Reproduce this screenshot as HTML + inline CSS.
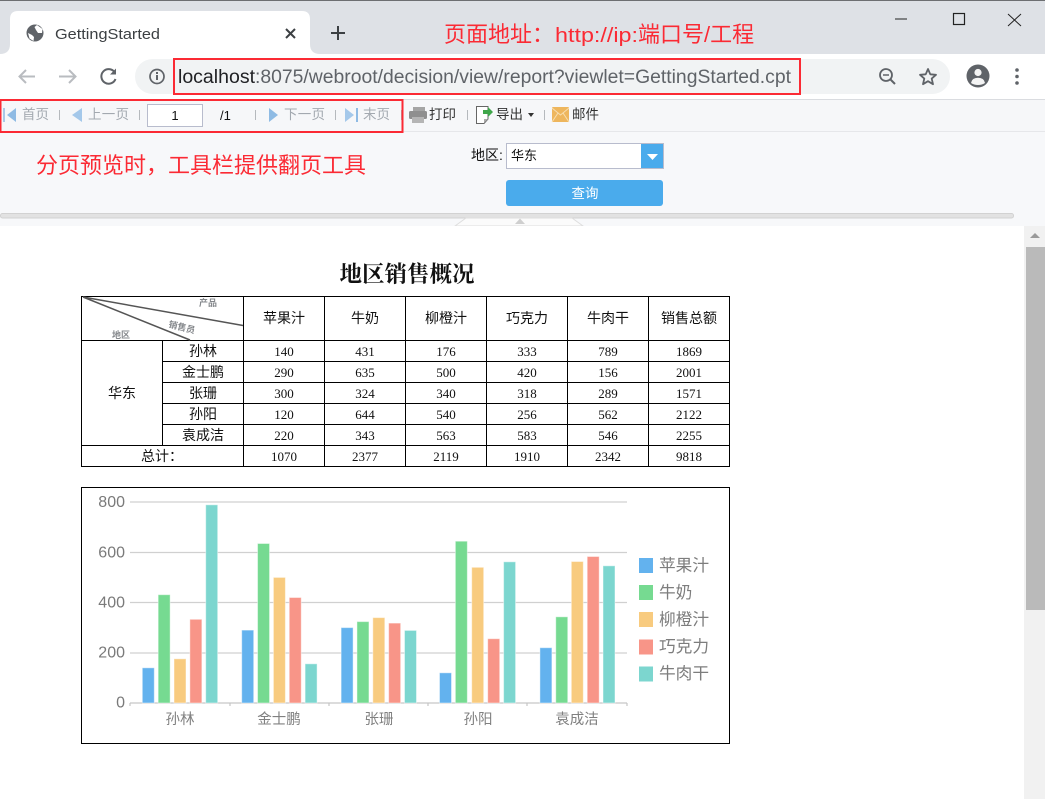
<!DOCTYPE html>
<html lang="zh">
<head>
<meta charset="utf-8">
<title>GettingStarted</title>
<style>
html,body{margin:0;padding:0;background:#fff;width:1045px;height:799px;overflow:hidden}
svg{display:block}
text{font-family:"Liberation Sans","Noto Sans CJK SC",sans-serif}
.tb{font-family:"Liberation Serif","WenQuanYi Zen Hei","Noto Sans CJK SC",sans-serif;font-size:14px;fill:#111;text-anchor:middle}
.nm{font-size:13px}
.gr{font-size:13.5px;fill:#a3a9b0;font-family:"Liberation Sans","Noto Sans CJK SC",sans-serif}
.dk{font-size:13.5px;fill:#333;font-family:"Liberation Sans","Noto Sans CJK SC",sans-serif}
.red{fill:#fb2a34;font-size:22px}
.ax{fill:#7a7a7a;font-size:16px;text-anchor:end}
.cat{fill:#808080;font-size:14.5px;text-anchor:middle}
.lg{fill:#7d7d7d;font-size:16.7px}
.s{fill:#85888c;font-size:9px}
</style>
</head>
<body>
<svg width="1045" height="799" viewBox="0 0 1045 799" xmlns="http://www.w3.org/2000/svg">
<!-- browser chrome -->
<rect width="1045" height="54" fill="#dee1e6"/>
<rect width="1045" height="1" fill="#6d6f72"/>
<path d="M0 54 Q10 54 10 44 V19 Q10 11 18 11 H302 Q310 11 310 19 V44 Q310 54 320 54 Z" fill="#fff"/>
<circle cx="35" cy="33" r="8.500" fill="#5f6368"/>
<path d="M37 25 L42.500 29 L42 33 L38 33 L36 30 L34.500 27 Z M28 33 L32 35 L34 37 L33.500 41 L29.500 38.500 Z" fill="#fff"/>
<text x="55" y="39" font-size="15" fill="#3c4043" textLength="105" lengthAdjust="spacingAndGlyphs">GettingStarted</text>
<path d="M286 29 L295 38 M295 29 L286 38" stroke="#3c4043" stroke-width="2"/>
<path d="M338 26 V40 M331 33 H345" stroke="#3c4043" stroke-width="2"/>
<text class="red" x="444" y="42">页面地址：</text>
<text x="555" y="42" fill="#fb2a34" font-size="20" textLength="83" lengthAdjust="spacingAndGlyphs">http://ip:</text>
<text class="red" x="638" y="42">端口号/工程</text>
<path d="M895 19 H907" stroke="#222" stroke-width="1"/>
<rect x="953.500" y="13.500" width="11" height="11" fill="none" stroke="#222" stroke-width="1.200"/>
<path d="M1008 14 L1021 26 M1021 14 L1008 26" stroke="#222" stroke-width="1"/>

<rect y="54" width="1045" height="45" fill="#fff"/>
<rect y="99" width="1045" height="1" fill="#dadce0"/>
<path d="M35 76.500 H20 M26 70 L19.500 76.500 L26 83" fill="none" stroke="#b9bcc0" stroke-width="2"/>
<path d="M59 76.500 H75 M69 70 L75.500 76.500 L69 83" fill="none" stroke="#b9bcc0" stroke-width="2"/>
<path d="M114.500 72 A7.300 7.300 0 1 0 115.500 79" fill="none" stroke="#5f6368" stroke-width="2"/>
<path d="M116 68.500 V74.500 H110 Z" fill="#5f6368"/>
<rect x="135" y="59" width="815" height="35" rx="17.500" fill="#f1f3f4"/>
<circle cx="157" cy="76.500" r="7" fill="none" stroke="#5f6368" stroke-width="1.700"/>
<rect x="156" y="75" width="2" height="5" fill="#5f6368"/>
<rect x="156" y="72" width="2" height="2" fill="#5f6368"/>
<text x="178" y="83" font-size="19" fill="#202124" textLength="77" lengthAdjust="spacingAndGlyphs">localhost</text>
<text x="255" y="83" font-size="19" fill="#5f6368" textLength="536" lengthAdjust="spacingAndGlyphs">:8075/webroot/decision/view/report?viewlet=GettingStarted.cpt</text>
<rect x="174" y="59" width="626" height="35" fill="none" stroke="#fb2a34" stroke-width="2"/>
<circle cx="886" cy="75" r="6" fill="none" stroke="#5f6368" stroke-width="1.800"/>
<path d="M883 75 H889" stroke="#5f6368" stroke-width="1.500"/>
<path d="M890.500 79.500 L895 84" stroke="#5f6368" stroke-width="2"/>
<path d="M928 69 L930.300 74.300 L936 74.800 L931.700 78.600 L933 84.200 L928 81.200 L923 84.200 L924.300 78.600 L920 74.800 L925.700 74.300 Z" fill="none" stroke="#5f6368" stroke-width="1.800" stroke-linejoin="round"/>
<circle cx="978" cy="76" r="11.500" fill="#5f6368"/>
<circle cx="978" cy="72.500" r="3.600" fill="#f4f4f4"/>
<path d="M971 83 Q972 77.800 978 77.800 Q984 77.800 985 83 Q982 85 978 85 Q974 85 971 83 Z" fill="#f4f4f4"/>
<circle cx="1017" cy="70" r="1.800" fill="#5f6368"/>
<circle cx="1017" cy="76.500" r="1.800" fill="#5f6368"/>
<circle cx="1017" cy="83" r="1.800" fill="#5f6368"/>

<!-- toolbar -->
<rect y="100" width="1045" height="31" fill="#f6f7f9"/>
<rect y="131" width="1045" height="1" fill="#e6e7ea"/>
<rect y="132" width="1045" height="94" fill="#f7f8fa"/>
<rect x="3" y="108" width="2" height="14" fill="#a9c9e8"/>
<path d="M7 115 L16 108 V122 Z" fill="#8fbbe4"/>
<text class="gr" x="22" y="119">首页</text>
<rect x="59" y="110" width="1" height="10" fill="#b5b9bd"/>
<path d="M72 115 L82 108 V122 Z" fill="#a4c8ea"/>
<text class="gr" x="88" y="119" textLength="41">上一页</text>
<rect x="139" y="110" width="1" height="10" fill="#b5b9bd"/>
<rect x="147.500" y="104.500" width="55" height="22" fill="#fff" stroke="#b8bccd"/>
<text x="175" y="120" font-size="13" fill="#111" text-anchor="middle">1</text>
<text x="220" y="120" font-size="13" fill="#111">/1</text>
<rect x="255" y="110" width="1" height="10" fill="#b5b9bd"/>
<path d="M269 108 L278 115 L269 122 Z" fill="#8fbbe4"/>
<text class="gr" x="284" y="119" textLength="41">下一页</text>
<rect x="335" y="110" width="1" height="10" fill="#b5b9bd"/>
<path d="M345 108 L354 115 L345 122 Z" fill="#a4c8ea"/>
<rect x="356" y="108" width="2" height="14" fill="#8fbbe4"/>
<text class="gr" x="363" y="119">末页</text>
<rect x="401" y="110" width="1" height="10" fill="#b5b9bd"/>
<rect x="0.500" y="100" width="402" height="32" fill="none" stroke="#fb2a34" stroke-width="2"/>
<rect x="413" y="107" width="12" height="5" fill="#a5a5a5"/>
<rect x="409" y="111" width="18" height="8" rx="1.500" fill="#8f8f8f"/>
<rect x="412" y="117" width="12" height="6" fill="#b5b5b5"/>
<text class="dk" x="429" y="119">打印</text>
<rect x="467" y="110" width="1" height="10" fill="#b5b9bd"/>
<path d="M476.500 106.500 H488 V119 L484 123.500 H476.500 Z" fill="#fff" stroke="#666"/>
<path d="M484 119 V123 L488 119 Z" fill="#aaa"/>
<path d="M483 110 H488 V107 L493 112 L488 117 V114 H483 Z" fill="#3fa64a"/>
<text class="dk" x="496" y="119">导出</text>
<path d="M528 113 H534 L531 117 Z" fill="#333"/>
<rect x="544" y="110" width="1" height="10" fill="#b5b9bd"/>
<rect x="552" y="107" width="17" height="15" rx="1" fill="#eeb65d"/>
<path d="M552 108 L560.500 115 L569 108 M552 122 L558 113 M569 122 L563 113" fill="none" stroke="#f8deb0" stroke-width="1"/>
<text class="dk" x="572" y="119">邮件</text>

<!-- parameter pane -->
<text class="red" x="36" y="173">分页预览时，工具栏提供翻页工具</text>
<text x="471" y="160" font-size="14" fill="#111" style="font-family:'Liberation Sans','WenQuanYi Zen Hei',sans-serif">地区:</text>
<rect x="506.500" y="143.500" width="157" height="25" fill="#fff" stroke="#b8bccd"/>
<text x="511" y="160" font-size="13" fill="#111" style="font-family:'Liberation Sans','WenQuanYi Zen Hei',sans-serif">华东</text>
<rect x="641" y="144" width="22" height="24" fill="#4aabec"/>
<path d="M647 154 H658 L652.500 160 Z" fill="#fff"/>
<rect x="506" y="180" width="157" height="26" rx="3" fill="#4aabec"/>
<text x="585" y="198" font-size="13.500" fill="#fff" text-anchor="middle">查询</text>
<rect x="0.500" y="213.500" width="1013" height="4.500" rx="2" fill="#e2e2e2" stroke="#d2d2d2"/>
<path d="M455 226 L466 218 H572 L583 226 Z" fill="#fbfbfb" stroke="#dedede"/>
<path d="M515 224 L520 218.500 L525 224 Z" fill="#cfcfcf"/>

<!-- content -->
<rect y="226" width="1024" height="573" fill="#fff"/>
<rect x="1024" y="226" width="21" height="573" fill="#f1f1f1"/>
<rect x="1026" y="247" width="19" height="363" fill="#bababa"/>
<path d="M1030 238 L1035 233 L1040 238 Z" fill="#9a9a9a"/>

<text x="407" y="282" font-size="22.500" font-weight="700" fill="#111" text-anchor="middle" style="font-family:'Noto Serif CJK SC',serif">地区销售概况</text>

<!-- table -->
<g stroke="#000" stroke-width="1" fill="none" shape-rendering="crispEdges">
<rect x="81.500" y="296.500" width="648" height="170"/>
<path d="M243.500 296 V466 M324.500 296 V466 M405.500 296 V466 M486.500 296 V466 M567.500 296 V466 M648.500 296 V466"/>
<path d="M162.500 340 V445"/>
<path d="M81 340.500 H730 M162 361.500 H730 M162 382.500 H730 M162 403.500 H730 M162 424.500 H730 M81 445.500 H730"/>
</g>
<path d="M83 297 L243 325.500 M83 297 L190 340" stroke="#555" stroke-width="1.500" fill="none"/>
<text class="s" x="199" y="306" font-weight="700">产品</text>
<text class="s" x="112" y="338" font-weight="700">地区</text>
<text class="s" x="168" y="327" font-weight="700" transform="rotate(14 168 327)">销售员</text>
<g class="tb">
<text class="tb" x="284" y="323">苹果汁</text><text class="tb" x="365" y="323">牛奶</text><text class="tb" x="446" y="323">柳橙汁</text><text class="tb" x="527" y="323">巧克力</text><text class="tb" x="608" y="323">牛肉干</text><text class="tb" x="689" y="323">销售总额</text>
<text class="tb" x="122" y="398">华东</text>
<text class="tb" x="203" y="356">孙林</text><text class="tb" x="203" y="377">金士鹏</text><text class="tb" x="203" y="398">张珊</text><text class="tb" x="203" y="419">孙阳</text><text class="tb" x="203" y="440">袁成洁</text>
<text class="tb" x="162" y="461">总计：</text>
<text class="tb nm" x="284" y="356">140</text><text class="tb nm" x="365" y="356">431</text><text class="tb nm" x="446" y="356">176</text><text class="tb nm" x="527" y="356">333</text><text class="tb nm" x="608" y="356">789</text><text class="tb nm" x="689" y="356">1869</text>
<text class="tb nm" x="284" y="377">290</text><text class="tb nm" x="365" y="377">635</text><text class="tb nm" x="446" y="377">500</text><text class="tb nm" x="527" y="377">420</text><text class="tb nm" x="608" y="377">156</text><text class="tb nm" x="689" y="377">2001</text>
<text class="tb nm" x="284" y="398">300</text><text class="tb nm" x="365" y="398">324</text><text class="tb nm" x="446" y="398">340</text><text class="tb nm" x="527" y="398">318</text><text class="tb nm" x="608" y="398">289</text><text class="tb nm" x="689" y="398">1571</text>
<text class="tb nm" x="284" y="419">120</text><text class="tb nm" x="365" y="419">644</text><text class="tb nm" x="446" y="419">540</text><text class="tb nm" x="527" y="419">256</text><text class="tb nm" x="608" y="419">562</text><text class="tb nm" x="689" y="419">2122</text>
<text class="tb nm" x="284" y="440">220</text><text class="tb nm" x="365" y="440">343</text><text class="tb nm" x="446" y="440">563</text><text class="tb nm" x="527" y="440">583</text><text class="tb nm" x="608" y="440">546</text><text class="tb nm" x="689" y="440">2255</text>
<text class="tb nm" x="284" y="461">1070</text><text class="tb nm" x="365" y="461">2377</text><text class="tb nm" x="446" y="461">2119</text><text class="tb nm" x="527" y="461">1910</text><text class="tb nm" x="608" y="461">2342</text><text class="tb nm" x="689" y="461">9818</text>
</g>

<!-- chart -->
<rect x="81.500" y="487.500" width="648" height="256" fill="#fff" stroke="#000" shape-rendering="crispEdges"/>
<path d="M130 502 H627 M130 552.500 H627 M130 602.500 H627 M130 653 H627" stroke="#d0d0d0" stroke-width="1.200"/>
<path d="M130 703 H627 M130 703 V706 M230 703 V706 M329 703 V706 M428 703 V706 M527 703 V706 M627 703 V706" stroke="#c6c6c6" stroke-width="1.200" fill="none"/>
<text class="ax" x="125" y="507">800</text>
<text class="ax" x="125" y="557.500">600</text>
<text class="ax" x="125" y="607.500">400</text>
<text class="ax" x="125" y="657.500">200</text>
<text class="ax" x="125" y="707.500">0</text>
<g fill="#63b2ee" stroke="#fff" stroke-opacity=".45">
<rect x="142.300" y="667.800" width="12" height="35.200"/><rect x="241.700" y="630.100" width="12" height="72.900"/><rect x="341.100" y="627.600" width="12" height="75.400"/><rect x="439.500" y="672.800" width="12" height="30.200"/><rect x="539.900" y="647.700" width="12" height="55.300"/>
</g>
<g fill="#76da91" stroke="#fff" stroke-opacity=".45">
<rect x="158.150" y="594.700" width="12" height="108.300"/><rect x="257.550" y="543.500" width="12" height="159.500"/><rect x="356.950" y="621.600" width="12" height="81.400"/><rect x="455.350" y="541.200" width="12" height="161.800"/><rect x="555.750" y="616.800" width="12" height="86.200"/>
</g>
<g fill="#f8cb7f" stroke="#fff" stroke-opacity=".45">
<rect x="174" y="658.800" width="12" height="44.200"/><rect x="273.400" y="577.400" width="12" height="125.600"/><rect x="372.800" y="617.600" width="12" height="85.400"/><rect x="471.700" y="567.300" width="12" height="135.700"/><rect x="571.300" y="561.500" width="12" height="141.500"/>
</g>
<g fill="#f89588" stroke="#fff" stroke-opacity=".45">
<rect x="189.850" y="619.300" width="12" height="83.700"/><rect x="289.250" y="597.500" width="12" height="105.500"/><rect x="388.650" y="623.100" width="12" height="79.900"/><rect x="487.700" y="638.700" width="12" height="64.300"/><rect x="587.200" y="556.500" width="12" height="146.500"/>
</g>
<g fill="#7cd6cf" stroke="#fff" stroke-opacity=".45">
<rect x="205.700" y="504.800" width="12" height="198.200"/><rect x="305.100" y="663.800" width="12" height="39.200"/><rect x="404.500" y="630.400" width="12" height="72.600"/><rect x="503.600" y="561.800" width="12" height="141.200"/><rect x="603" y="565.800" width="12" height="137.200"/>
</g>
<text class="cat" x="180" y="724">孙林</text>
<text class="cat" x="279" y="724">金士鹏</text>
<text class="cat" x="379" y="724">张珊</text>
<text class="cat" x="478" y="724">孙阳</text>
<text class="cat" x="577" y="724">袁成洁</text>
<rect x="639" y="558" width="14" height="15" fill="#63b2ee"/>
<rect x="639" y="585" width="14" height="15" fill="#76da91"/>
<rect x="639" y="612" width="14" height="15" fill="#f8cb7f"/>
<rect x="639" y="639.500" width="14" height="15" fill="#f89588"/>
<rect x="639" y="666.500" width="14" height="15" fill="#7cd6cf"/>
<text class="lg" x="659" y="571">苹果汁</text>
<text class="lg" x="659" y="598">牛奶</text>
<text class="lg" x="659" y="625">柳橙汁</text>
<text class="lg" x="659" y="652">巧克力</text>
<text class="lg" x="659" y="679">牛肉干</text>
</svg>
</body>
</html>
